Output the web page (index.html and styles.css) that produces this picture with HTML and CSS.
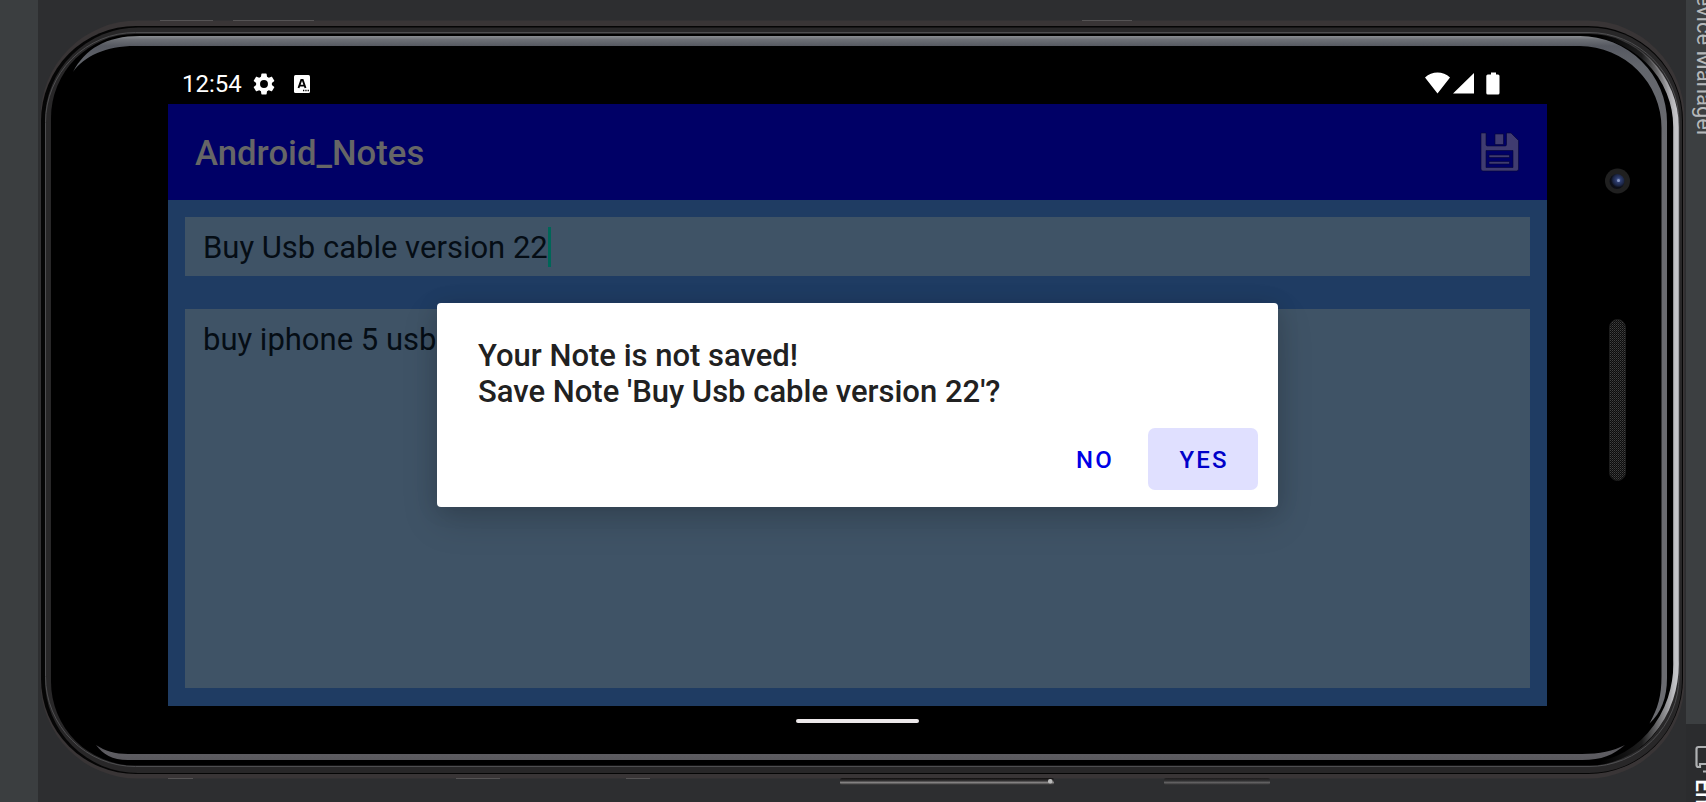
FILE: index.html
```html
<!DOCTYPE html>
<html lang="en">
<head>
<meta charset="utf-8">
<title>Android_Notes</title>
<link rel="stylesheet" href="styles.css">
</head>
<body>
<div class="ide">
  <div class="gutter"></div>
  <main class="stage">
    <svg class="bezel" viewBox="38 0 1648 802" aria-hidden="true">
      <defs>
        <linearGradient id="top" x1="0" y1="36" x2="0" y2="140" gradientUnits="userSpaceOnUse">
          <stop offset="0" stop-color="#8b8e92"/><stop offset=".035" stop-color="#6c6f75"/><stop offset=".096" stop-color="#565961"/><stop offset=".3" stop-color="#63666c"/><stop offset="1" stop-color="#6a6b70"/>
        </linearGradient>
        <linearGradient id="bot" x1="0" y1="0" x2="0" y2="1">
          <stop offset="0" stop-color="#4c4b50"/><stop offset=".5" stop-color="#5e5d62"/><stop offset="1" stop-color="#5a595e"/>
        </linearGradient>
        <linearGradient id="fade" x1="1600" y1="0" x2="1676" y2="0" gradientUnits="userSpaceOnUse">
          <stop offset="0" stop-color="#c4c4c8" stop-opacity="0"/><stop offset=".55" stop-color="#c4c4c8" stop-opacity=".15"/><stop offset="1" stop-color="#c4c4c8"/>
        </linearGradient>
        <linearGradient id="btn" x1="0" y1="0" x2="0" y2="1">
          <stop offset="0" stop-color="#100e0e"/><stop offset=".4" stop-color="#333233"/><stop offset=".65" stop-color="#858383"/><stop offset="1" stop-color="#262627"/>
        </linearGradient>
        <pattern id="mesh" width="2" height="2" patternUnits="userSpaceOnUse">
          <rect width="2" height="2" fill="#0c0c0c"/><rect width="1" height="1" fill="#424242"/><rect x="1" y="1" width="1" height="1" fill="#2b2b2b"/>
        </pattern>
        <radialGradient id="lens" cx=".6" cy=".4">
          <stop offset="0" stop-color="#5a6ea6"/><stop offset=".35" stop-color="#2c3b6c"/><stop offset=".75" stop-color="#1b2544"/><stop offset="1" stop-color="#0c0e16"/>
        </radialGradient>
      </defs>
      <rect x="40.5" y="20.5" width="1644" height="758" rx="97" fill="#393536"/>
      <rect x="41" y="26" width="1642" height="748" rx="95" fill="#050505"/>
      <rect x="45" y="27.5" width="1637" height="745.5" rx="93" fill="#282728"/>
      <rect x="45.5" y="32.5" width="1633.5" height="734" rx="90" fill="none" stroke="#4e4e50"/>
      <rect x="51" y="34" width="1622" height="731.5" rx="84" fill="#000"/>
      <path d="M1580 33 A96 94 0 0 1 1676 127 V660 A94 102 0 0 1 1582 766" fill="none" stroke="url(#fade)" stroke-width="5.500"/>
      <path d="M73 72 C85 49 106 36 140 36 H1580 A87 86 0 0 1 1667 122 V678 C1667 698 1661 713 1649.500 723.500 C1658 708 1661.500 696 1661.500 676 V128 A82 82 0 0 0 1580 46 H135 C106 46 84 56 73 72Z" fill="url(#top)"/>
      <path d="M96 745 C105 751 115 754 128 754 H1582 C1600 754 1613 751 1625 745 C1613 755 1602 760 1582 760 H128 C112 760 103 754 96 745Z" fill="url(#bot)"/>
      <rect x="840" y="778" width="214" height="7" rx="2" fill="url(#btn)"/>
      <rect x="1048" y="779" width="4.500" height="4.500" rx="2" fill="#bbb"/>
      <rect x="1164" y="778" width="106" height="7" rx="2" fill="url(#btn)" opacity=".6"/>
      <path d="M160 20.500H213M233 20.500H314M1082 20.500H1132M168 778.500H193M456 778.500H500M626 778.500H650" stroke="#555354"/>
      <circle cx="1617.500" cy="181" r="12.500" fill="#202020"/>
      <circle cx="1617" cy="181.500" r="7.500" fill="url(#lens)"/>
      <circle cx="1618.500" cy="180.500" r="1.500" fill="#8b9ac4"/>
      <rect x="1609.500" y="319.500" width="16" height="161" rx="8" fill="url(#mesh)" stroke="#1c1c1c"/>
    </svg>
    <section class="screen">
      <header class="status">
        <span class="time">12:54</span>
        <svg class="gear" viewBox="2 2 20 20"><path fill="#fff" d="M19.14 12.94c.04-.3.06-.61.06-.94s-.02-.64-.07-.94l2.030-1.580a.5.5 0 0 0 .12-.61l-1.920-3.320a.49.49 0 0 0-.59-.22l-2.390.96c-.5-.38-1.030-.7-1.620-.94L14.400 2.810a.48.48 0 0 0-.48-.41h-3.840a.47.47 0 0 0-.47.41L9.250 5.350c-.59.24-1.130.57-1.620.94l-2.390-.96a.48.48 0 0 0-.59.22L2.740 8.870a.47.47 0 0 0 .12.61l2.030 1.580c-.05.3-.09.63-.09.94s.02.64.07.94l-2.030 1.580a.5.5 0 0 0-.12.61l1.920 3.320c.12.22.37.29.59.22l2.390-.96c.5.38 1.030.7 1.620.94l.36 2.540c.05.24.24.41.48.41h3.840c.24 0 .44-.17.47-.41l.36-2.540c.59-.24 1.130-.56 1.620-.94l2.390.96c.22.08.47 0 .59-.22l1.920-3.320a.47.47 0 0 0-.12-.61zM12 15.600A3.600 3.600 0 1 1 12 8.400a3.600 3.600 0 0 1 0 7.200z"/></svg>
        <svg class="badge" viewBox="0 0 16 18"><rect width="16" height="18" rx="1.500" fill="#fff"/><path d="M4.500 13 7.300 5h1.400l2.800 8M5.700 10.600h4.600" fill="none" stroke="#000" stroke-width="1.900"/><path d="M9 15.500h1.300M11.300 15.500h1.300M13.600 15.500h1.300" stroke="#000" stroke-width="1.300"/></svg>
        <svg class="signals" viewBox="0 0 76 23"><path fill="#fff" d="M0 5.500C7-1.300 18-1.300 25 5.500L12.500 21.500ZM49 1V21.500H28ZM66 .500h5V2.500h2a1.500 1.500 0 0 1 1.500 1.500V21a1.500 1.500 0 0 1-1.500 1.500H62.800A1.500 1.500 0 0 1 61.300 21V4a1.500 1.500 0 0 1 1.500-1.500H66Z"/></svg>
      </header>
      <div class="appbar">
        <h1 class="app-title">Android_Notes</h1>
        <svg class="save" viewBox="0 0 40 40"><path fill="#403c70" stroke="#030338" stroke-width=".6" fill-rule="evenodd" d="M1 1H6V12.500Q6 14 7.500 14H25Q26.500 14 26.500 12.500V1H31L38.500 8.500V37Q38.500 39 36.500 39H3Q1 39 1 37ZM6 18.500V35.500H33V18.500ZM15 2h8.500V12.500H15ZM9 23h20.500v2.500H9ZM9 29.500h20.500v2.500H9Z"/></svg>
      </div>
      <div class="editor">
        <div class="field field-title"><span class="field-text">Buy Usb cable version 22</span><i class="caret"></i></div>
        <div class="field field-body"><span class="field-text">buy iphone 5 usb</span></div>
      </div>
      <footer class="navbar"><span class="pill"></span></footer>
      <div class="dialog" role="alertdialog">
        <p class="dialog-text">Your Note is not saved!<br>Save Note 'Buy Usb cable version 22'?</p>
        <div class="actions"><button class="btn">NO</button><button class="btn btn-focus">YES</button></div>
      </div>
    </section>
  </main>
  <aside class="tools">
    <div class="tool"><span class="tool-label">Device Manager</span></div>
    <div class="tool tool-active">
      <svg class="tool-icon" viewBox="0 0 12 30"><path d="M12 2H3.500Q1.500 2 1.500 4V20Q1.500 22 3.500 22H6M5 23V19H12M8 26.500H12" fill="none" stroke="#afb1b3" stroke-width="2.200"/></svg>
      <span class="tool-label">Emulator</span>
    </div>
  </aside>
</div>
</body>
</html>
```

FILE: styles.css
```css
* { box-sizing: border-box; }
body { margin: 0; overflow: hidden; font-family: Roboto, "Liberation Sans", sans-serif; }
.ide { display: grid; grid-template-columns: 38px 1648px 20px; height: 802px; overflow: hidden; background: #2d2e30; }
.gutter { background: #3b3e40; }
.stage { position: relative; padding: 60px 139px 0 130px; }
.bezel { position: absolute; inset: 0; width: 1648px; height: 802px; }
.screen { position: relative; height: 676px; display: flex; flex-direction: column; background: #000; }
.status { height: 44px; display: flex; align-items: center; padding: 2px 46px 0 14px; color: #fff; }
.time { width: 60px; font-size: 24px; line-height: 28px; margin-top: 2px; }
.gear { width: 22px; height: 22px; margin: 1px 0 0 11px; }
.badge { width: 16px; height: 18px; margin: 1px 0 0 19px; }
.signals { width: 76px; height: 23px; margin-left: auto; }
.appbar { height: 95.500px; display: flex; align-items: center; justify-content: space-between; padding: 0 27px; background: #000066; }
.app-title { margin: 3px 0 0; font-size: 34.700px; line-height: 40px; font-weight: 500; color: #666; }
.save { width: 40px; height: 40px; }
.editor { height: 506.500px; padding: 17.500px 17px 18px; display: flex; flex-direction: column; gap: 33px; background: #1f3c63; }
.field { display: flex; align-items: flex-start; padding: 10px 18px; background: #3f5366; color: #050d15; }
.field-title { height: 59px; }
.field-body { flex: 1; }
.field-text { padding-top: 1px; font-size: 31px; line-height: 40px; white-space: nowrap; }
.caret { width: 3px; height: 40px; background: #006658; }
.navbar { flex: 1; display: flex; justify-content: center; padding-top: 12.500px; }
.pill { width: 123px; height: 4px; border-radius: 2px; background: #ece8ea; }
.dialog { position: absolute; left: 269px; top: 242.500px; width: 841px; height: 204px; padding: 35px 20px 16.500px 41px; display: flex; flex-direction: column; justify-content: space-between; background: #fff; border-radius: 4px; box-shadow: 0 14px 36px rgba(0,0,0,.15), 0 2px 22px rgba(0,0,0,.12); }
.dialog-text { margin: 0; font-size: 31px; line-height: 36px; font-weight: 500; color: #212121; white-space: nowrap; }
.actions { display: flex; justify-content: flex-end; }
.btn { height: 62px; width: 108px; border: 0; border-radius: 7px; background: none; padding: 1px 0 0 2px; font: 500 24px/28px Roboto, sans-serif; letter-spacing: 2.100px; color: #0000e6; }
.btn-focus { width: 110px; background: #e0e0ff; color: #0000c9; }
.tools { display: flex; flex-direction: column; background: #3c3f41; overflow: hidden; }
.tool { height: 724px; padding-left: 5px; display: flex; flex-direction: column; color: #b6b8ba; }
.tool-label { writing-mode: vertical-rl; font-size: 22px; line-height: 26px; width: 26px; white-space: nowrap; }
.tool:first-child .tool-label { margin-top: -20px; }
.tool-active { height: 78px; background: #2b2c2e; color: #fff; padding-top: 21px; padding-left: 9px; }
.tool-icon { width: 12px; height: 30px; flex: none; }
.tool-active .tool-label { margin: 4px 0 0 -5px; font-size: 23px; font-weight: 500; }
```
